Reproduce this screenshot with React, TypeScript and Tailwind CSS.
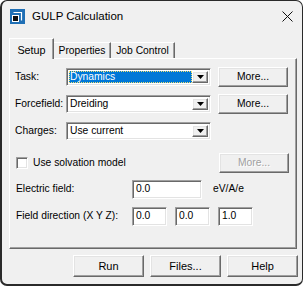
import React from 'react';

const raised =
  'bg-[#f0f0f0] border border-t-white border-l-white border-r-[#696969] border-b-[#696969] shadow-[inset_-1px_-1px_0_#a0a0a0,inset_1px_1px_0_#e3e3e3]';
const sunken =
  'bg-white border border-t-[#a0a0a0] border-l-[#a0a0a0] border-r-white border-b-white shadow-[inset_1px_1px_0_#696969,inset_-1px_-1px_0_#e3e3e3]';

function Button({ label, disabled, className = '' }: { label: string; disabled?: boolean; className?: string }) {
  return (
    <div className={`${raised} flex items-center justify-center ${className}`}>
      <span className={disabled ? 'text-[#a0a0a0] [text-shadow:1px_1px_0_#fff]' : 'text-black'}>{label}</span>
    </div>
  );
}

function Combo({ value, selected }: { value: string; selected?: boolean }) {
  return (
    <div className={`${sunken} w-[145px] h-[18px] flex items-stretch p-[2px]`}>
      <div className="flex-1 flex items-center">
        {selected ? (
          <div className="h-full w-full bg-[#0078d7] text-white flex items-center pl-[1px] outline-1 outline-dotted outline-[#f0e070] -outline-offset-1">
            {value}
          </div>
        ) : (
          <span className="pl-[1px]">{value}</span>
        )}
      </div>
      <div className={`${raised} w-[16px] flex items-center justify-center`}>
        <svg width="7" height="4" viewBox="0 0 7 4">
          <path d="M0 0h7L3.5 4z" fill="#000" />
        </svg>
      </div>
    </div>
  );
}

function Field({ value, className = '' }: { value: string; className?: string }) {
  return (
    <div className={`${sunken} h-[19px] flex items-center pl-[3px] ${className}`}>
      {value}
    </div>
  );
}

export default function App() {
  return (
    <div className="w-[303px] h-[286px] bg-white font-['Liberation_Sans',Arial,sans-serif] text-[10.3px] text-black">
      <div className="h-full bg-[#f0f0f0] border border-[#2a2a2a] border-l-2 border-b-2 rounded-[7px] flex flex-col overflow-hidden">
        {/* title bar */}
        <div className="h-[31px] flex items-center pl-[8px] pr-[8px] shrink-0">
          <svg width="15" height="15" viewBox="0 0 15 15">
            <rect x="0" y="0" width="15" height="15" fill="#1f6fb5" />
            <path d="M3.5 3.5H11.5V11.5" stroke="#fff" strokeWidth="1.2" fill="none" />
            <rect x="2.5" y="6.5" width="6" height="6" fill="#111" stroke="#fff" strokeWidth="1" />
          </svg>
          <span className="ml-[7px] text-[11.5px]">GULP Calculation</span>
          <svg className="ml-auto mr-[1px]" width="11" height="11" viewBox="0 0 11 11">
            <path d="M0.5 0.5L10.5 10.5M10.5 0.5L0.5 10.5" stroke="#111" strokeWidth="1" />
          </svg>
        </div>

        {/* tabs */}
        <div className="ml-[7px] mt-[6px] flex items-end h-[20px]">
          <div className="relative z-10 h-[21px] -mb-px w-[45px] bg-[#f0f0f0] border-t border-l border-t-white border-l-white border-r border-r-[#696969] shadow-[inset_-1px_0_0_#a0a0a0] flex items-start justify-center pt-[3px] text-[10.8px]">
            Setup
          </div>
          <div className="h-[16px] w-[57px] border-t border-t-white border-r border-r-[#696969] shadow-[inset_-1px_0_0_#a0a0a0] flex items-center justify-center">
            Properties
          </div>
          <div className="h-[16px] w-[64px] border-t border-t-white border-r border-r-[#696969] shadow-[inset_-1px_0_0_#a0a0a0] flex items-center justify-center">
            Job Control
          </div>
        </div>

        {/* panel */}
        <div className="ml-[7px] mr-[5px] h-[191px] border border-t-white border-l-white border-r-[#696969] border-b-[#696969] shadow-[inset_-1px_-1px_0_#a0a0a0] pl-[5px] pt-[8px]">
          <div className="flex items-center h-[20px]">
            <span className="w-[51px]">Task:</span>
            <Combo value="Dynamics" selected />
            <Button label="More..." className="ml-[7px] w-[70px] h-[20px]" />
          </div>
          <div className="flex items-center h-[20px] mt-[7px]">
            <span className="w-[51px]">Forcefield:</span>
            <Combo value="Dreiding" />
            <Button label="More..." className="ml-[7px] w-[70px] h-[20px]" />
          </div>
          <div className="flex items-center h-[20px] mt-[7px]">
            <span className="w-[51px]">Charges:</span>
            <Combo value="Use current" />
          </div>
          <div className="flex items-center h-[20px] mt-[12px]">
            <div className={`${sunken} ml-[1px] w-[12px] h-[12px]`} />
            <span className="ml-[5px]">Use solvation model</span>
            <Button label="More..." disabled className="ml-auto mr-[7px] w-[70px] h-[20px]" />
          </div>
          <div className="flex items-center h-[20px] mt-[6px]">
            <span className="w-[117px] pl-[1px]">Electric field:</span>
            <Field value="0.0" className="w-[70px]" />
            <span className="ml-[11px]">eV/A/e</span>
          </div>
          <div className="flex items-center h-[20px] mt-[7px]">
            <span className="w-[117px] pl-[1px] whitespace-nowrap">Field direction (X Y Z):</span>
            <Field value="0.0" className="w-[35px]" />
            <Field value="0.0" className="w-[35px] ml-[8px]" />
            <Field value="1.0" className="w-[35px] ml-[8px]" />
          </div>
        </div>

        {/* bottom buttons */}
        <div className="flex justify-end gap-[6px] mt-[6px] pr-[4px]">
          <Button label="Run" className="w-[71px] h-[22px] text-[11px]" />
          <Button label="Files..." className="w-[71px] h-[22px] text-[11px]" />
          <Button label="Help" className="w-[71px] h-[22px] text-[11px]" />
        </div>
      </div>
    </div>
  );
}
